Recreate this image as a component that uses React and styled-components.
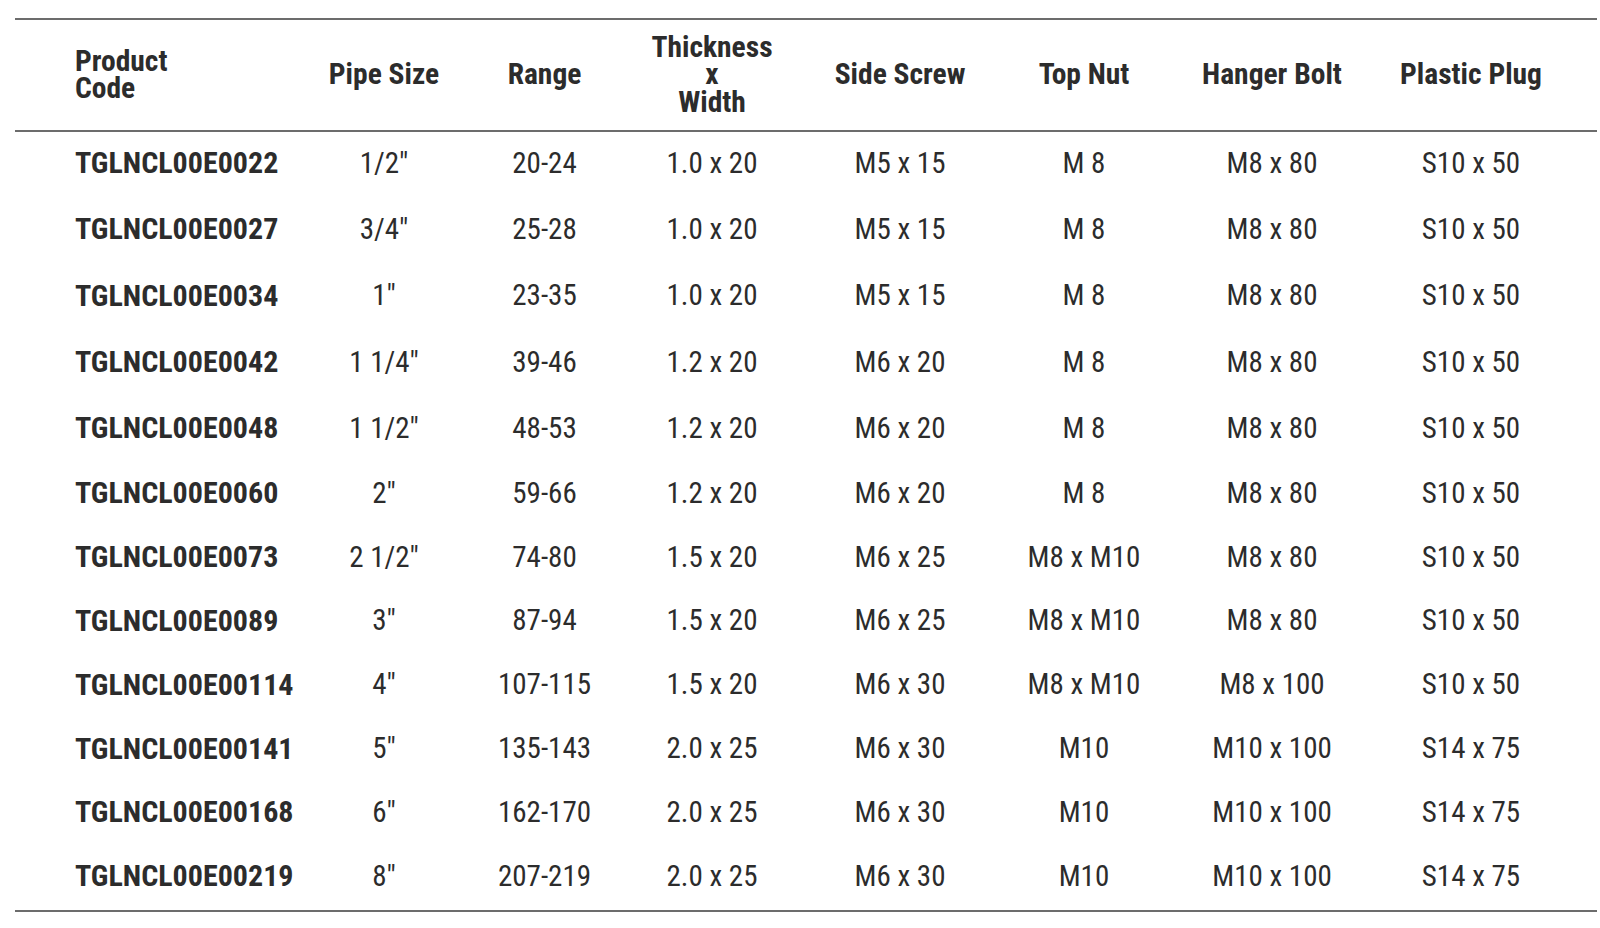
import React from "react";
import styled, { createGlobalStyle } from "styled-components";

const Global = createGlobalStyle`
  html, body { margin: 0; padding: 0; background: #ffffff; }
  body { font-family: "Roboto Condensed", "DejaVu Sans Condensed", "Liberation Sans", sans-serif; color: #2e2e2e; }
`;

const Page = styled.div`
  width: 1600px;
  height: 928px;
  padding: 18px 3px 0 15px;
  box-sizing: border-box;
`;

const Table = styled.div`
  display: grid;
  grid-template-columns: 289px 160px 161px 174px 202px 166px 210px 188px 1fr;
  border-top: 2px solid #6c6c6c;
  border-bottom: 2px solid #6c6c6c;
`;

const HeadCell = styled.div`
  height: 110px;
  display: flex;
  align-items: center;
  justify-content: ${(p) => (p.$left ? "flex-start" : "center")};
  text-align: ${(p) => (p.$left ? "left" : "center")};
  padding-left: ${(p) => (p.$left ? "60px" : "0")};
  font-weight: 700;
  font-size: 29.5px;
  line-height: 27.5px;
  color: #2c2c2c;
  border-bottom: 2px solid #6c6c6c;
  white-space: pre-line;
`;

const Cell = styled.div`
  height: ${(p) => p.$h}px;
  box-sizing: border-box;
  padding-bottom: 5px;
  display: flex;
  align-items: center;
  justify-content: ${(p) => (p.$left ? "flex-start" : "center")};
  padding-left: ${(p) => (p.$left ? "60px" : "0")};
  font-size: ${(p) => (p.$bold ? "30px" : "29px")};
  font-weight: ${(p) => (p.$bold ? 700 : 400)};
  color: #2c2c2c;
  white-space: pre;
`;

const headers = [
  "Product\nCode",
  "Pipe Size",
  "Range",
  "Thickness\nx\nWidth",
  "Side Screw",
  "Top Nut",
  "Hanger Bolt",
  "Plastic Plug",
  "",
];

const rows = [
  ["TGLNCL00E0022", '1/2"', "20-24", "1.0 x 20", "M5 x 15", "M 8", "M8 x 80", "S10 x 50"],
  ["TGLNCL00E0027", '3/4"', "25-28", "1.0 x 20", "M5 x 15", "M 8", "M8 x 80", "S10 x 50"],
  ["TGLNCL00E0034", '1"', "23-35", "1.0 x 20", "M5 x 15", "M 8", "M8 x 80", "S10 x 50"],
  ["TGLNCL00E0042", '1 1/4"', "39-46", "1.2 x 20", "M6 x 20", "M 8", "M8 x 80", "S10 x 50"],
  ["TGLNCL00E0048", '1 1/2"', "48-53", "1.2 x 20", "M6 x 20", "M 8", "M8 x 80", "S10 x 50"],
  ["TGLNCL00E0060", '2"', "59-66", "1.2 x 20", "M6 x 20", "M 8", "M8 x 80", "S10 x 50"],
  ["TGLNCL00E0073", '2 1/2"', "74-80", "1.5 x 20", "M6 x 25", "M8 x M10", "M8 x 80", "S10 x 50"],
  ["TGLNCL00E0089", '3"', "87-94", "1.5 x 20", "M6 x 25", "M8 x M10", "M8 x 80", "S10 x 50"],
  ["TGLNCL00E00114", '4"', "107-115", "1.5 x 20", "M6 x 30", "M8 x M10", "M8 x 100", "S10 x 50"],
  ["TGLNCL00E00141", '5"', "135-143", "2.0 x 25", "M6 x 30", "M10", "M10 x 100", "S14 x 75"],
  ["TGLNCL00E00168", '6"', "162-170", "2.0 x 25", "M6 x 30", "M10", "M10 x 100", "S14 x 75"],
  ["TGLNCL00E00219", '8"', "207-219", "2.0 x 25", "M6 x 30", "M10", "M10 x 100", "S14 x 75"],
];

export default function App() {
  return (
    <>
      <Global />
      <Page>
        <Table>
          {headers.map((h, i) => (
            <HeadCell key={"h" + i} $left={i === 0}>
              {h}
            </HeadCell>
          ))}
          {rows.map((r, ri) => {
            const h = ri < 5 ? 66.3 : 63.8;
            return [...r, ""].map((v, ci) => (
              <Cell key={ri + "-" + ci} $h={h} $left={ci === 0} $bold={ci === 0}>
                {v}
              </Cell>
            ));
          })}
        </Table>
      </Page>
    </>
  );
}
